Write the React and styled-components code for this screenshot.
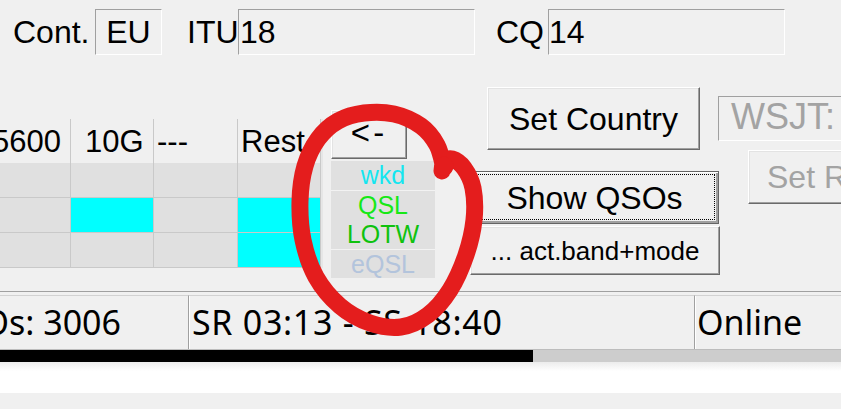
import React from 'react';
import styled, { createGlobalStyle } from 'styled-components';

const Global = createGlobalStyle`
  html, body { margin: 0; padding: 0; background: #f0f0f0; }
  body { width: 841px; height: 409px; overflow: hidden; }
`;

const Window = styled.div`
  position: relative;
  width: 841px;
  height: 409px;
  overflow: hidden;
  background: #f0f0f0;
  font-family: "Liberation Sans", Arial, sans-serif;
  color: #000;
  display: flex;
  flex-direction: column;
`;

/* ---------- top row ---------- */
const TopRow = styled.div`
  display: flex;
  align-items: center;
  height: 46px;
  padding: 9px 0 0 13px;
  font-size: 32px;
`;

const Label = styled.span`
  box-sizing: border-box;
  width: ${(p) => p.$w}px;
  margin-left: ${(p) => p.$ml || 0}px;
  line-height: 1;
  white-space: nowrap;
`;

const Field = styled.div`
  box-sizing: border-box;
  width: ${(p) => p.$w}px;
  height: ${(p) => p.$h || 46}px;
  margin-top: ${(p) => p.$mt || 0}px;
  border: 1px solid;
  border-color: #a0a0a0 #ffffff #ffffff #a0a0a0;
  display: flex;
  align-items: center;
  justify-content: ${(p) => (p.$center ? 'center' : 'flex-start')};
  padding: 0 0 ${(p) => p.$pb || 0}px ${(p) => p.$pad || 0}px;
  font-size: ${(p) => p.$fs || 32}px;
  line-height: 1;
  white-space: nowrap;
  overflow: hidden;
  color: ${(p) => (p.$disabled ? '#a3a3a3' : '#000')};
`;

/* ---------- middle ---------- */
const MidRow = styled.div`
  display: flex;
  align-items: flex-start;
  height: 236px;
`;

const GridCol = styled.div`
  width: 323px;
  padding-top: 64px;
`;

const Table = styled.div`
  display: grid;
  grid-template-columns: 71px 83px 84px 83px;
  width: 321px;
  border-right: 2px solid #e6e6e6;
`;

const HeadCell = styled.div`
  box-sizing: border-box;
  height: 44px;
  border-right: 1px solid #c9c9c9;
  display: flex;
  align-items: center;
  justify-content: ${(p) => (p.$end ? 'flex-end' : 'flex-start')};
  padding-left: ${(p) => (p.$end ? 0 : 3 + (p.$indent || 0))}px;
  padding-right: ${(p) => (p.$end ? 9 : 0)}px;
  font-size: 31px;
  line-height: 1;
  white-space: nowrap;
  overflow: hidden;
`;

const BodyCell = styled.div`
  box-sizing: border-box;
  height: 35px;
  background: ${(p) => (p.$on ? '#00ffff' : '#e0e0e0')};
  border-right: 1px solid #c9c9c9;
  border-bottom: 1px solid #c9c9c9;
`;

const LegendCol = styled.div`
  margin-left: 8px;
  width: 104px;
  padding-top: 55px;
  display: flex;
  flex-direction: column;
`;

const Button = styled.button`
  box-sizing: border-box;
  position: relative;
  width: ${(p) => p.$w}px;
  height: ${(p) => p.$h}px;
  margin: ${(p) => p.$mt || 0}px 0 0 ${(p) => p.$ml || 0}px;
  padding: 0 0 ${(p) => p.$pb || 0}px ${(p) => p.$pl || 0}px;
  display: flex;
  align-items: center;
  justify-content: ${(p) => (p.$left ? 'flex-start' : 'center')};
  background: #f0f0f0;
  font-family: "Liberation Sans", Arial, sans-serif;
  font-size: ${(p) => p.$fs || 32}px;
  font-weight: ${(p) => (p.$bold ? 700 : 400)};
  line-height: 1;
  white-space: nowrap;
  color: ${(p) => (p.$disabled ? '#a3a3a3' : '#000')};
  letter-spacing: ${(p) => p.$ls || 0}px;
  border: 1px solid;
  border-color: #ffffff #6a6a6a #6a6a6a #ffffff;
  box-shadow: inset -1px -1px #a0a0a0, inset 1px 1px #e3e3e3;
  ${(p) =>
    p.$default &&
    `
    border-color: #646464;
    box-shadow: inset 1px 1px #ffffff, inset -2px -2px #a0a0a0;
    &::after {
      content: '';
      position: absolute;
      inset: 2px 3px 3px 3px;
      border: 1px dotted #000;
    }
  `}
`;

const Legend = styled.div`
  margin-top: 2px;
  width: 104px;
  background: #e0e0e0;
  display: flex;
  flex-direction: column;
`;

const LegendRow = styled.div`
  box-sizing: border-box;
  height: ${(p) => p.$h || 29}px;
  border-top: ${(p) => (p.$sep ? '1px solid #f2f2f2' : 'none')};
  display: flex;
  align-items: center;
  justify-content: center;
  font-size: 25px;
  line-height: 1;
  color: ${(p) => p.$color};
`;

const ButtonsCol = styled.div`
  margin-left: 35px;
  width: 250px;
  display: flex;
  flex-direction: column;
`;

const RightCol = styled.div`
  margin-left: -2px;
  flex: 1;
  display: flex;
  flex-direction: column;
`;

/* ---------- status ---------- */
const StatusBar = styled.div`
  border-top: 1px solid #a0a0a0;
  padding-top: 3px;
  display: grid;
  grid-template-columns: 188px 506px 1fr;
  font-family: "Noto Sans", "Open Sans", sans-serif;
  font-size: 34px;
`;

const Panel = styled.div`
  box-sizing: border-box;
  height: 54px;
  border-top: 1px solid #d2d2d2;
  border-left: ${(p) => (p.$first ? 'none' : '1px solid #a0a0a0')};
  box-shadow: ${(p) => (p.$first ? 'none' : 'inset 1px 0 #ffffff')};
  display: flex;
  align-items: center;
  justify-content: ${(p) => (p.$end ? 'flex-end' : 'flex-start')};
  padding: 0 ${(p) => p.$pr || 0}px 2px ${(p) => p.$pl || 0}px;
  letter-spacing: ${(p) => p.$ls || 0}px;
  white-space: nowrap;
  overflow: hidden;
  line-height: 1;
`;

const Progress = styled.div`
  height: 12px;
  background: #cdcdcd;
  border-top: 1px solid #bdbdbd;
  display: flex;
`;

const ProgressFill = styled.div`
  height: 100%;
  background: #000;
`;

const WhiteStrip = styled.div`
  height: 31px;
  background: linear-gradient(#ececec, #ffffff 9px, #ffffff);
`;

const Annotation = styled.svg`
  position: absolute;
  left: 0;
  top: 0;
  pointer-events: none;
`;

const loop = [
  [444, 168], [437, 145], [421, 126], [394, 114], [364, 113], [338, 121],
  [318, 139], [305, 166], [300, 201], [303, 240], [316, 277], [340, 306],
  [370, 323], [401, 327], [428, 315], [450, 290], [466, 255], [474, 220],
  [473, 188], [464, 168], [452, 159], [444, 162], [442, 171],
];

function smoothPath(pts) {
  const f = (v) => v.toFixed(1);
  let d = `M${pts[0][0]},${pts[0][1]}`;
  for (let i = 0; i < pts.length - 1; i++) {
    const p0 = pts[i - 1] || pts[i];
    const p1 = pts[i];
    const p2 = pts[i + 1];
    const p3 = pts[i + 2] || p2;
    const c1 = [p1[0] + (p2[0] - p0[0]) / 6, p1[1] + (p2[1] - p0[1]) / 6];
    const c2 = [p2[0] - (p3[0] - p1[0]) / 6, p2[1] - (p3[1] - p1[1]) / 6];
    d += ` C${f(c1[0])},${f(c1[1])} ${f(c2[0])},${f(c2[1])} ${p2[0]},${p2[1]}`;
  }
  return d;
}

const heads = [
  { t: '5600', end: true },
  { t: '10G', indent: 11 },
  { t: '---' },
  { t: 'Rest' },
];

const rows = [
  [0, 0, 0, 0],
  [0, 1, 0, 1],
  [0, 0, 0, 1],
];

const legend = [
  { t: 'wkd', c: '#14e6f0' },
  { t: 'QSL', c: '#17e817', sep: true },
  { t: 'LOTW', c: '#0fc20f', h: 30 },
  { t: 'eQSL', c: '#b3c4dc', sep: true },
];

export default function App() {
  return (
    <Window>
      <Global />
      <TopRow>
        <Label $w={82}>Cont.</Label>
        <Field $w={67} $center>EU</Field>
        <Label $w={51} $ml={25}>ITU</Label>
        <Field $w={237} $pad={1}>18</Field>
        <Label $w={52} $ml={21}>CQ</Label>
        <Field $w={237}>14</Field>
      </TopRow>

      <MidRow>
        <GridCol>
          <Table>
            {heads.map((h) => (
              <HeadCell key={h.t} $end={h.end} $indent={h.indent}>
                {h.t}
              </HeadCell>
            ))}
            {rows.map((r, i) =>
              r.map((on, j) => <BodyCell key={`${i}-${j}`} $on={!!on} />)
            )}
          </Table>
        </GridCol>

        <LegendCol>
          <Button $w={76} $h={49} $fs={33} $ls={3} $pb={4}>&lt;-</Button>
          <Legend>
            {legend.map((l) => (
              <LegendRow key={l.t} $color={l.c} $sep={l.sep} $h={l.h}>
                {l.t}
              </LegendRow>
            ))}
          </Legend>
        </LegendCol>

        <ButtonsCol>
          <Button $w={213} $h={63} $mt={32} $ml={17}>Set Country</Button>
          <Button $w={249} $h={53} $mt={21} $default>Show QSOs</Button>
          <Button $w={250} $h={49} $mt={2} $fs={26}>... act.band+mode</Button>
        </ButtonsCol>

        <RightCol>
          <Field $w={140} $h={45} $mt={41} $pad={12} $pb={4} $fs={36} $disabled>
            WSJT:
          </Field>
          <Button $w={120} $h={54} $mt={9} $ml={30} $left $pl={18} $fs={32} $disabled>
            Set R
          </Button>
        </RightCol>
      </MidRow>

      <StatusBar>
        <Panel $first $end $pr={67}>QSOs: 3006</Panel>
        <Panel $pl={3} $ls={0.7}>SR 03:13 - SS 18:40</Panel>
        <Panel $pl={2}>Online</Panel>
      </StatusBar>
      <Progress>
        <ProgressFill style={{ width: 533 }} />
      </Progress>
      <WhiteStrip />

      <Annotation width="841" height="409" viewBox="0 0 841 409">
        <path
          d={smoothPath(loop)}
          fill="none"
          stroke="#e41d1d"
          strokeWidth="17"
          strokeLinecap="round"
          strokeLinejoin="round"
        />
        <circle cx="444" cy="166" r="9.5" fill="#e41d1d" />
      </Annotation>
    </Window>
  );
}
